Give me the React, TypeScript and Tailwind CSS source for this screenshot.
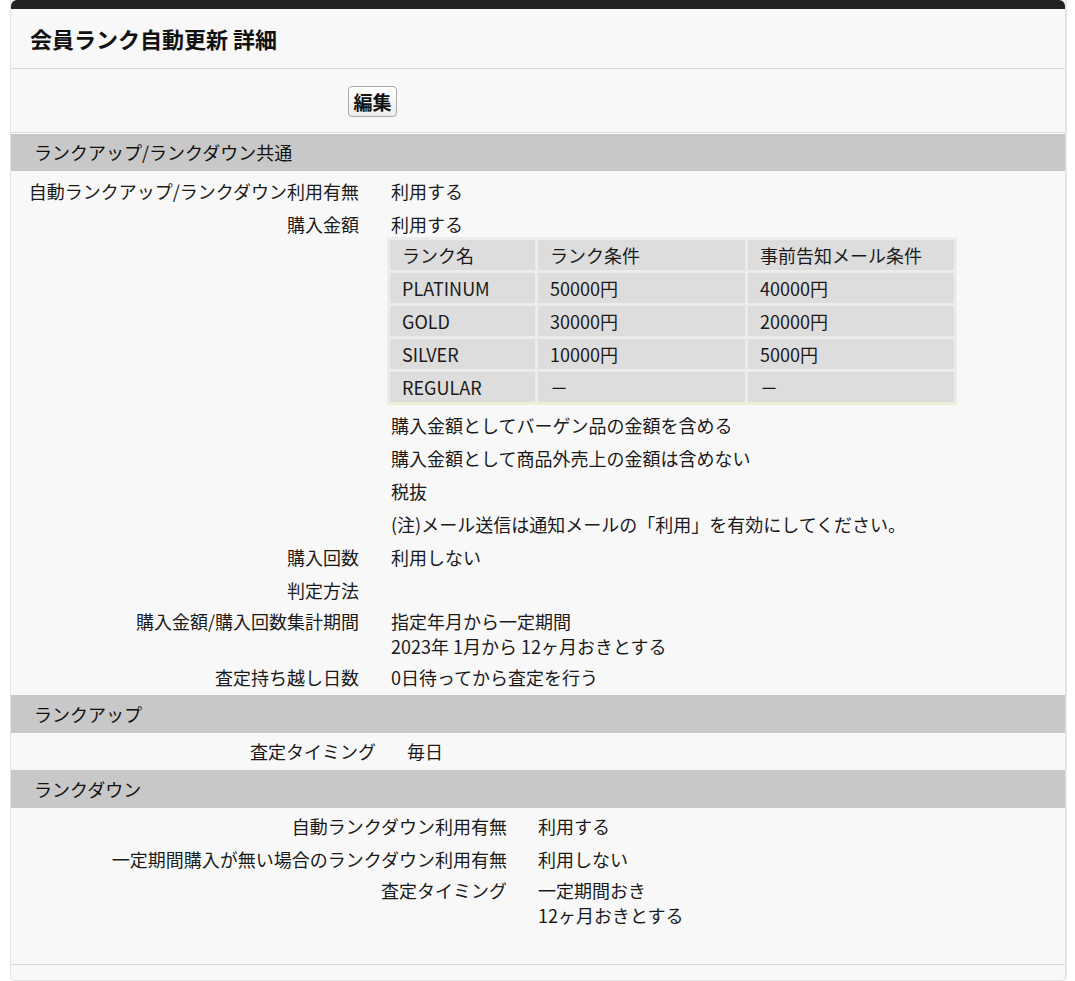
import React from "react";

const font = { fontFamily: '"Noto Sans CJK JP", "Noto Sans", sans-serif' };

function Row({
  label,
  children,
  lw,
  gap,
  tight,
}: {
  label: string;
  children?: React.ReactNode;
  lw: string;
  gap: string;
  tight?: boolean;
}) {
  return (
    <div className={`flex ${tight ? "py-0.5" : "py-1"}`}>
      <div className={`${lw} shrink-0 text-right leading-[25px]`}>{label}</div>
      <div className={`${gap} leading-[25px]`}>{children}</div>
    </div>
  );
}

function SectionHeader({ title, h }: { title: string; h: string }) {
  return (
    <div className={`${h} bg-[#c8c8c8] pl-[23px] flex items-center text-[18px] text-[#111]`}>
      {title}
    </div>
  );
}

const tableRows = [
  ["ランク名", "ランク条件", "事前告知メール条件"],
  ["PLATINUM", "50000円", "40000円"],
  ["GOLD", "30000円", "20000円"],
  ["SILVER", "10000円", "5000円"],
  ["REGULAR", "－", "－"],
];

export default function App() {
  return (
    <div className="min-h-screen bg-white pl-[10px] pr-[9px]" style={font}>
      <div className="w-[1056px] rounded-b-[5px] border-x border-b border-[#e2e2e2] bg-[#f8f8f8] text-[#1a1a1a] shadow-[1px_0_0_#e8e8e8]">
        <div className="h-[9px] rounded-t-[6px] bg-[#222222]" />
        <div className="h-[60px] border-b border-[#dddddd] pl-[19px] flex items-center text-[22px] font-bold text-[#111]">
          会員ランク自動更新 詳細
        </div>
        <div className="h-[64px] border-b border-[#dddddd] flex items-center">
          <button className="ml-[337px] mt-[1px] h-[31px] w-[49px] rounded-[4px] border border-[#a9a9a9] bg-gradient-to-b from-white to-[#ececec] text-[19px] font-bold leading-none text-[#111]">
            編集
          </button>
        </div>
        <div className="h-px" />
        <SectionHeader title="ランクアップ/ランクダウン共通" h="h-[37px]" />
        <div className="pt-1 pb-px text-[18px]">
          <Row label="自動ランクアップ/ランクダウン利用有無" lw="w-[348px]" gap="ml-[32px]">
            利用する
          </Row>
          <Row label="購入金額" lw="w-[348px]" gap="ml-[28px]">
            <div className="pl-[4px]">利用する</div>
            <div className="grid w-[570px] grid-cols-[145px_207px_206px] gap-[3px] border-b-[3px] border-[#efeed6] bg-[#ececec] px-[3px] pt-[3px] text-[18px]">
              {tableRows.map((r, i) => (
                <React.Fragment key={i}>
                  {r.map((c, j) => (
                    <div key={j} className="h-[30px] bg-[#dddddd] pl-[12px] leading-[30px]">
                      {c}
                    </div>
                  ))}
                </React.Fragment>
              ))}
            </div>
            <div className="pl-[4px]">
              <div className="mt-[8px]">購入金額としてバーゲン品の金額を含める</div>
              <div className="mt-[8px]">購入金額として商品外売上の金額は含めない</div>
              <div className="mt-[8px]">税抜</div>
              <div className="mt-[8px]">(注)メール送信は通知メールの「利用」を有効にしてください。</div>
            </div>
          </Row>
          <Row label="購入回数" lw="w-[348px]" gap="ml-[32px]">
            利用しない
          </Row>
          <Row label="判定方法" lw="w-[348px]" gap="ml-[32px]" />
          <Row label="購入金額/購入回数集計期間" lw="w-[348px]" gap="ml-[32px]" tight>
            <div>指定年月から一定期間</div>
            <div>2023年 1月から 12ヶ月おきとする</div>
          </Row>
          <Row label="査定持ち越し日数" lw="w-[348px]" gap="ml-[32px]">
            0日待ってから査定を行う
          </Row>
        </div>
        <SectionHeader title="ランクアップ" h="h-[38px]" />
        <div className="py-0.5 text-[18px]">
          <Row label="査定タイミング" lw="w-[365px]" gap="ml-[31px]">
            毎日
          </Row>
        </div>
        <SectionHeader title="ランクダウン" h="h-[38px]" />
        <div className="pt-0.5 pb-[34px] text-[18px] border-b border-[#dddddd]">
          <Row label="自動ランクダウン利用有無" lw="w-[496px]" gap="ml-[31px]">
            利用する
          </Row>
          <Row label="一定期間購入が無い場合のランクダウン利用有無" lw="w-[496px]" gap="ml-[31px]">
            利用しない
          </Row>
          <Row label="査定タイミング" lw="w-[496px]" gap="ml-[31px]" tight>
            <div>一定期間おき</div>
            <div>12ヶ月おきとする</div>
          </Row>
        </div>
        <div className="h-[15px]" />
      </div>
    </div>
  );
}
